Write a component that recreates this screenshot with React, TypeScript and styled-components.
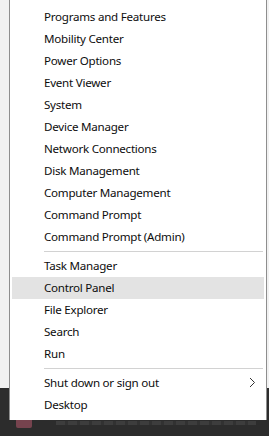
import React from 'react';
import styled, { createGlobalStyle } from 'styled-components';

const GlobalStyle = createGlobalStyle`
  html, body {
    margin: 0;
    padding: 0;
    background: #f2f2f2;
  }
  * {
    box-sizing: border-box;
  }
`;

const Screen = styled.div`
  width: 269px;
  height: 436px;
  display: flex;
  flex-direction: column;
  overflow: hidden;
  font-family: 'Noto Sans', 'Open Sans', sans-serif;
`;

const Desk = styled.div`
  display: flex;
  height: 420px;
`;

// the strips of desktop that show beside the menu; the taskbar starts at 388
const Side = styled.div<{ $w: number }>`
  width: ${({ $w }) => $w}px;
  flex-shrink: 0;
  background: linear-gradient(to bottom, #f1f1f1 0, #f1f1f1 388px, #2d2d2d 388px);
`;

const Menu = styled.div`
  width: 258px;
  flex-shrink: 0;
  background: #ffffff;
  border-left: 1px solid #8e8e8e;
  border-right: 1px solid #8e8e8e;
  padding: 6px 0 4px;
  display: flex;
  flex-direction: column;
`;

const Item = styled.div<{ $active?: boolean }>`
  height: 22px;
  margin: 0 2px;
  padding: 0 7px 1px 31px;
  display: flex;
  align-items: center;
  justify-content: space-between;
  font-size: 11.6px;
  letter-spacing: -0.25px;
  color: #0d0d0d;
  white-space: nowrap;
  background: ${({ $active }) => ($active ? '#e3e3e3' : 'transparent')};
  border: 1px solid ${({ $active }) => ($active ? '#e3e3e3' : 'transparent')};
`;

const Separator = styled.div`
  height: 7px;
  display: flex;
  align-items: center;
  padding: 0 3px 0 34px;
  &::after {
    content: '';
    flex: 1;
    height: 1px;
    background: #d2d2d2;
  }
`;

const Chevron = () => (
  <svg width="7" height="11" viewBox="0 0 7 11">
    <path d="M1 1 L5.5 5.5 L1 10" fill="none" stroke="#333" strokeWidth="1" />
  </svg>
);

const Taskbar = styled.div`
  height: 16px;
  background: #2c2c2c;
  display: flex;
  align-items: flex-start;
  padding-left: 16px;
  gap: 24px;
`;

const AppIcon = styled.div`
  width: 16px;
  height: 8px;
  background: #8a4a58;
  border-radius: 0 0 2px 2px;
  opacity: 0.8;
`;

const Ghost = styled.div`
  margin-top: 1px;
  width: 200px;
  height: 4px;
  background: repeating-linear-gradient(to right, #3d3d3d 0 9px, #323232 9px 12px);
`;

const groups: string[][] = [
  [
    'Programs and Features',
    'Mobility Center',
    'Power Options',
    'Event Viewer',
    'System',
    'Device Manager',
    'Network Connections',
    'Disk Management',
    'Computer Management',
    'Command Prompt',
    'Command Prompt (Admin)',
  ],
  ['Task Manager', 'Control Panel', 'File Explorer', 'Search', 'Run'],
  ['Shut down or sign out', 'Desktop'],
];

const App: React.FC = () => (
  <>
    <GlobalStyle />
    <Screen>
      <Desk>
        <Side $w={9} />
        <Menu>
          {groups.map((items, gi) => (
            <React.Fragment key={gi}>
              {gi > 0 && <Separator />}
              {items.map((label) => (
                <Item key={label} $active={label === 'Control Panel'}>
                  <span>{label}</span>
                  {label === 'Shut down or sign out' && <Chevron />}
                </Item>
              ))}
            </React.Fragment>
          ))}
        </Menu>
        <Side $w={2} />
      </Desk>
      <Taskbar>
        <AppIcon />
        <Ghost />
      </Taskbar>
    </Screen>
  </>
);

export default App;
